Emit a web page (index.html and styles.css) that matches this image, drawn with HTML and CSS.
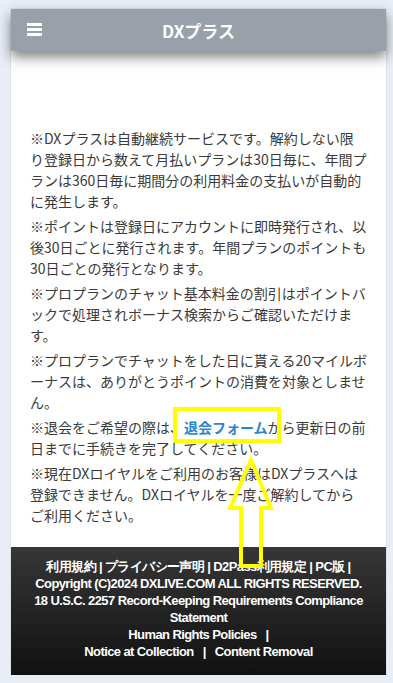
FILE: index.html
```html
<!DOCTYPE html>
<html lang="ja">
<head>
<meta charset="utf-8">
<title>DXプラス</title>
<link rel="stylesheet" href="styles.css">
</head>
<body>
<div class="page">
  <header class="topbar">
    <span class="burger"><i></i><i></i><i></i></span>
    <h1 class="title">DXプラス</h1>
  </header>
  <main class="content">
    <p>※DXプラスは自動継続サービスです。解約しない限り登録日から数えて月払いプランは30日毎に、年間プランは360日毎に期間分の利用料金の支払いが自動的に発生します。</p>
    <p>※ポイントは登録日にアカウントに即時発行され、以後30日ごとに発行されます。年間プランのポイントも30日ごとの発行となります。</p>
    <p>※プロプランのチャット基本料金の割引はポイントバックで処理されボーナス検索からご確認いただけます。</p>
    <p>※プロプランでチャットをした日に貰える20マイルボーナスは、ありがとうポイントの消費を対象としません。</p>
    <p>※退会をご希望の際は、<a class="link" href="#">退会フォーム</a>から更新日の前日までに手続きを完了してください。</p>
    <p>※現在DXロイヤルをご利用のお客様はDXプラスへは登録できません。DXロイヤルを一度ご解約してからご利用ください。</p>
  </main>
  <footer class="footer">
    <div>利用規約 | プライバシー声明 | D2Pass利用規定 | PC版 |</div>
    <div>Copyright (C)2024 DXLIVE.COM ALL RIGHTS RESERVED.</div>
    <div>18 U.S.C. 2257 Record-Keeping Requirements Compliance Statement</div>
    <div>Human Rights Policies &nbsp; |</div>
    <div>Notice at Collection &nbsp; | &nbsp; Content Removal</div>
  </footer>
</div>
<svg class="annot" width="393" height="683" viewBox="0 0 393 683">
  <rect x="175" y="409" width="104" height="32" fill="none" stroke="#ffff00" stroke-width="4"/>
  <polygon points="251,460 271,508 261,508 261,566 241,566 241,508 230,508" fill="none" stroke="#ffff00" stroke-width="4" stroke-linejoin="miter"/>
</svg>
</body>
</html>
```

FILE: styles.css
```css
html, body {
  margin: 0;
  padding: 0;
}
body {
  background: #e9edf5;
  position: relative;
  height: 683px;
  overflow: hidden;
  font-family: "Noto Sans CJK JP", "Noto Sans", sans-serif;
}
.page {
  margin: 8px 0 0 10px;
  width: 375px;
  border: 1px solid #dde2ea;
  border-bottom: none;
  background: #fff;
}
.topbar {
  position: relative;
  height: 42px;
  background: #99a0aa;
  display: flex;
  align-items: center;
  justify-content: center;
  box-shadow: 0 6px 12px rgba(0, 0, 0, 0.5);
  z-index: 1;
}
.burger {
  position: absolute;
  left: 16px;
  top: 14px;
  display: flex;
  flex-direction: column;
  gap: 2.5px;
}
.burger i {
  display: block;
  width: 15px;
  height: 2.5px;
  background: #fff;
}
.title {
  margin: 0;
  color: #fff;
  font-size: 17px;
  font-weight: 700;
  letter-spacing: 0;
}
.content {
  padding: 77px 19px 17px 19px;
  color: #3a3a3a;
  font-size: 14px;
  line-height: 21px;
}
.content p {
  margin: 0 0 4px;
}
.link {
  color: #2a84d2;
  font-weight: 700;
  text-decoration: none;
}
.footer {
  background: linear-gradient(#363636, #111);
  color: #fff;
  font-family: "Liberation Sans", Arial, sans-serif;
  font-weight: 700;
  font-size: 13px;
  letter-spacing: -0.6px;
  line-height: 17px;
  text-align: center;
  padding: 11px 10px 15px;
}
.annot {
  position: absolute;
  left: 0;
  top: 0;
  pointer-events: none;
}
```
